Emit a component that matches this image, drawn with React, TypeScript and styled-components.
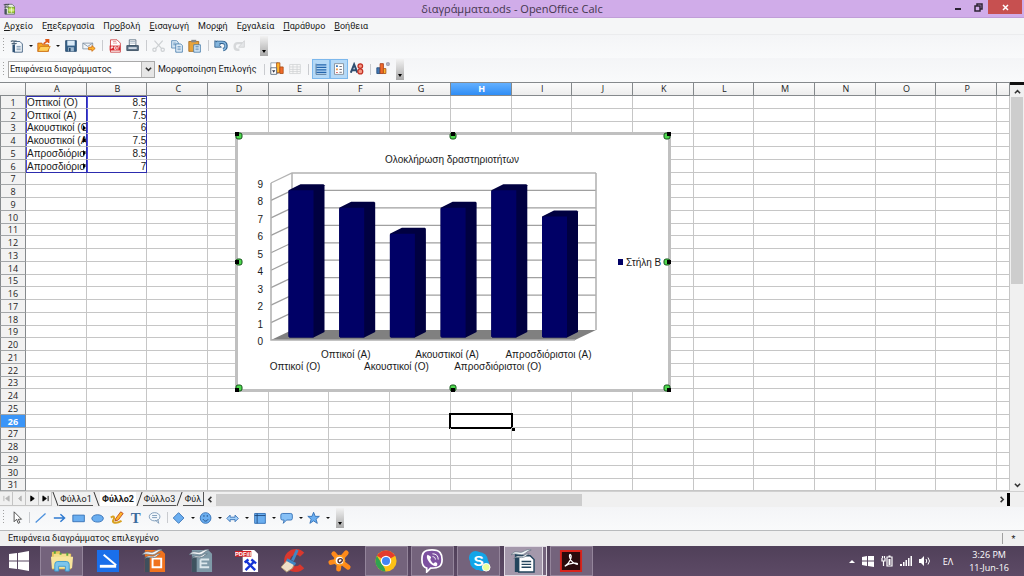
import React from 'react';
import styled, { createGlobalStyle, css } from 'styled-components';

const UI_FONT = `"Open Sans", "Noto Sans", sans-serif`;
const LABEL_FONT = `Roboto, "Noto Sans", sans-serif`;
const DOC_FONT = `"Liberation Sans", Arial, sans-serif`;

const GlobalStyle = createGlobalStyle`
  *, *::before, *::after { box-sizing: border-box; }
  body { margin: 0; background: #f5f6f7; font-family: ${UI_FONT}; font-size: 9px; color: #1a1a1a; }
  button, select { font: inherit; color: inherit; border: 0; background: none; padding: 0; margin: 0; }
`;

const Window = styled.div`
  min-height: 100vh;
  display: flex;
  flex-direction: column;
`;

/* ---------- title bar and menu ---------- */

const TitleBar = styled.header`
  display: grid;
  grid-template-columns: 1fr auto 1fr;
  height: 18px;
  background: #d0ace9;
  border-bottom: 1px solid #c09ed8;
`;
const TitleIcon = styled.div`
  padding: 2px 3px;
`;
const Title = styled.h1`
  margin: 0;
  font-size: 11px;
  line-height: 17px;
  font-weight: 400;
  color: #43364d;
`;
const WindowButtons = styled.div`
  display: flex;
  justify-content: flex-end;
  padding-right: 2px;
`;
const WindowButton = styled.button<{ $close?: boolean }>`
  display: flex;
  align-items: center;
  justify-content: center;
  width: ${p => (p.$close ? 34 : 20)}px;
  height: 14px;
  background: ${p => (p.$close ? '#c75050' : 'transparent')};
`;
const MenuBar = styled.nav`
  display: flex;
  gap: 9px;
  height: 17px;
  padding-left: 4px;
  font-family: ${LABEL_FONT};
  background: #f5f6f7;
  border-bottom: 1px solid #ebecee;
`;
const MenuItem = styled.button`
  line-height: 16px;
  white-space: nowrap;
`;

/* ---------- toolbars ---------- */

const Toolbar = styled.div<{ $h: number }>`
  display: flex;
  align-items: center;
  height: ${p => p.$h}px;
  padding-bottom: 2px;
  background: linear-gradient(#f4f5f7, #f9fafb);
`;
const Grip = styled.span`
  width: 2px;
  height: 15px;
  margin: 0 3px;
  background: repeating-linear-gradient(#a0a0a0 0 1px, transparent 1px 3px) 0 0 / 1px 100% no-repeat;
`;
const ToolGroup = styled.div<{ $gap?: number }>`
  display: flex;
  align-items: center;
  gap: ${p => p.$gap ?? 0}px;
`;
const ToolButton = styled.button<{ $on?: boolean }>`
  display: flex;
  align-items: center;
  justify-content: center;
  width: 18px;
  height: 20px;
  ${p => p.$on && css`
    background: #b5d9f7;
    border: 1px solid #7db8ec;
  `}
`;
const DropButton = styled.button`
  width: 9px;
  height: 18px;
  display: flex;
  align-items: center;
  justify-content: center;
  &::after {
    content: '';
    border: 2px solid transparent;
    border-top: 2px solid #111;
    border-bottom: 0;
  }
`;
const Separator = styled.span<{ $w: number }>`
  width: ${p => p.$w}px;
  height: 11px;
  background: linear-gradient(#c9cbcf, #c9cbcf) center / 1px 100% no-repeat;
`;
const Overflow = styled.button<{ $gap: number }>`
  align-self: stretch;
  width: 8px;
  margin: 1px 0 0 ${p => p.$gap}px;
  background: linear-gradient(#f2f2f2, #a9a9a9);
  display: flex;
  align-items: flex-end;
  justify-content: center;
  padding-bottom: 3px;
  &::after {
    content: '';
    border: 2px solid transparent;
    border-top: 3px solid #000;
    border-bottom: 0;
  }
`;
const SelectBox = styled.span`
  position: relative;
  display: flex;
  width: 147px;
  height: 17px;
  border: 1px solid #a9a9a9;
  background: #fff;
`;
const Select = styled.select`
  appearance: none;
  width: 100%;
  padding: 0 14px 0 1px;
  font-family: ${LABEL_FONT};
  font-size: 9px;
  line-height: 15px;
`;
const SelectArrow = styled.span`
  position: absolute;
  right: 0;
  top: 0;
  width: 13px;
  height: 15px;
  display: flex;
  align-items: center;
  justify-content: center;
  background: #e6e6e6;
  border-left: 1px solid #b4b4b4;
  pointer-events: none;
`;
const ToolLabel = styled.span`
  width: 105px;
  padding-left: 3px;
  font-family: ${LABEL_FONT};
  font-size: 9px;
  white-space: nowrap;
`;

/* ---------- sheet ---------- */

const SheetArea = styled.main`
  display: flex;
  background: #fff;
`;
const SheetCanvas = styled.div`
  position: relative;
  flex: 1;
  min-width: 0;
  overflow: hidden;
`;
const Grid = styled.table`
  width: 100%;
  table-layout: fixed;
  border-spacing: 0;
  border-collapse: separate;
`;
const HeadCell = styled.th<{ $on?: boolean }>`
  height: 14px;
  padding: 0 0 0 2px;
  font-size: 9px;
  line-height: 12px;
  font-weight: ${p => (p.$on ? 700 : 400)};
  color: ${p => (p.$on ? '#fff' : '#222')};
  background: ${p => (p.$on ? 'linear-gradient(#63b0ff, #2f8df5)' : 'linear-gradient(#fbfbfb, #ededed)')};
  border-right: 1px solid #85898c;
  border-bottom: 1px solid #85898c;
  border-top: 1px solid #85898c;
`;
const RowHead = styled.th<{ $on?: boolean }>`
  padding: 0;
  font-size: 9px;
  line-height: 11px;
  font-weight: ${p => (p.$on ? 700 : 400)};
  color: ${p => (p.$on ? '#fff' : '#222')};
  background: ${p => (p.$on ? '#3a95f8' : '#f2f2f2')};
  border-left: 1px solid #85898c;
  border-right: 1px solid #85898c;
  border-bottom: 1px solid #a3a6a8;
`;
const Row = styled.tr<{ $h: number }>`
  height: ${p => p.$h}px;
`;
const Cell = styled.td<{ $range?: boolean; $first?: boolean; $last?: boolean; $num?: boolean; $cursor?: boolean }>`
  position: relative;
  padding: 0 0 0 1px;
  font-family: ${DOC_FONT};
  font-size: 10px;
  line-height: 11px;
  white-space: nowrap;
  text-align: ${p => (p.$num ? 'right' : 'left')};
  border-right: 1px solid #c6c6c6;
  border-bottom: 1px solid #c6c6c6;
  ${p => p.$range && css`
    border-right-color: #2c2cae;
    box-shadow: inset 1px 0 0 #4a4ae0 ${p.$first ? ', inset 0 1px 0 #2c2cae' : ''};
    ${p.$last && 'border-bottom-color: #2c2cae;'}
  `}
  ${p => p.$cursor && css`
    &::before {
      content: '';
      position: absolute;
      inset: -2px;
      border: 2px solid #000;
    }
    &::after {
      content: '';
      position: absolute;
      right: -4px;
      bottom: -4px;
      width: 4px;
      height: 4px;
      background: #000;
    }
  `}
`;
const CellText = styled.div<{ $cut?: boolean }>`
  overflow: hidden;
  ${p => p.$cut && css`
    &::after {
      content: '';
      position: absolute;
      right: 0;
      top: 3px;
      border: 3px solid transparent;
      border-left: 3px solid #000;
      border-right: 0;
    }
  `}
`;
const VScroll = styled.div`
  width: 14px;
  display: flex;
  flex-direction: column;
  align-items: center;
  background: #f0f0f0;
  border-top: 3px solid #111;
`;
const ScrollArrow = styled.button`
  width: 12px;
  height: 12px;
  display: flex;
  align-items: center;
  justify-content: center;
`;
const VTrack = styled.div`
  flex: 1;
  width: 12px;
`;
const VThumb = styled.div`
  height: 49%;
  background: #cdcdcd;
`;

/* ---------- embedded chart ---------- */

const ChartObject = styled.figure`
  position: absolute;
  left: 235px;
  top: 50px;
  margin: 0;
  width: 436px;
  height: 260px;
  background: #fff;
  box-shadow: inset 0 0 0 3px #c0c0c0;
  svg { display: block; }
`;

/* ---------- sheet tabs ---------- */

const TabRow = styled.div`
  display: flex;
  height: 16px;
  background: #f0f0f0;
  border-top: 1px solid #d0d0d0;
`;
const NavButton = styled.button`
  width: 13px;
  height: 14px;
  display: flex;
  align-items: center;
  justify-content: center;
  border-right: 1px solid #c4c4c4;
  border-bottom: 1px solid #c4c4c4;
`;
const Tabs = styled.div`
  display: flex;
  width: 152px;
  height: 14px;
  overflow: hidden;
  border-right: 1px solid #555;
`;
const Tab = styled.button<{ $on?: boolean; $w: number }>`
  flex: none;
  width: ${p => p.$w}px;
  font-size: 9px;
  line-height: 12px;
  white-space: nowrap;
  text-align: center;
  font-weight: ${p => (p.$on ? 700 : 400)};
  font-family: ${LABEL_FONT};
  background: ${p => (p.$on ? '#fff' : 'transparent')};
  border-bottom: 1px solid ${p => (p.$on ? '#fff' : '#555')};
`;
const Slash = styled.span<{ $back?: boolean }>`
  flex: none;
  width: 1px;
  margin: 0 3px;
  background: #333;
  transform: skewX(${p => (p.$back ? 20 : -20)}deg);
`;
const HScroll = styled.div`
  flex: 1;
  display: flex;
  align-items: center;
`;
const HTrack = styled.div`
  flex: 1;
  height: 12px;
`;
const HThumb = styled.div`
  width: 47%;
  height: 12px;
  background: #cdcdcd;
`;
const SplitMark = styled.span`
  width: 3px;
  height: 13px;
  margin-right: 14px;
  background: #000;
`;

const StatusBar = styled.footer`
  display: flex;
  justify-content: space-between;
  height: 16px;
  padding-left: 8px;
  font-family: ${LABEL_FONT};
  font-size: 9px;
  line-height: 15px;
  background: #f0f0f0;
  border-top: 1px solid #b8babc;
`;
const StatusMark = styled.span`
  width: 22px;
  margin: 2px 0;
  line-height: 12px;
  text-align: center;
  border-left: 1px solid #a0a0a0;
`;

/* ---------- task bar ---------- */

const TaskBar = styled.div`
  display: flex;
  align-items: stretch;
  flex: 1;
  min-height: 30px;
  color: #fff;
  background: linear-gradient(#504059, #5d4a66);
`;
const StartButton = styled.button`
  width: 40px;
  display: flex;
  align-items: center;
  justify-content: center;
  padding-right: 3px;
`;
const TaskList = styled.div`
  display: flex;
  justify-content: space-between;
  width: 553px;
`;
const TaskButton = styled.button<{ $state?: 'open' | 'active' }>`
  width: 43px;
  display: flex;
  align-items: center;
  justify-content: center;
  border: 1px solid transparent;
  ${p => p.$state === 'open' && css`
    background: #74637c;
    border-color: #94859b;
  `}
  ${p => p.$state === 'active' && css`
    background: #a498ab;
    border-color: #e2dce5;
    padding-right: 4px;
    box-shadow: inset -3px 0 0 #74637c, inset -4px 0 0 #e2dce5;
  `}
`;
const Tray = styled.div`
  display: flex;
  align-items: center;
  gap: 7px;
  margin-left: auto;
  padding-right: 15px;
`;
const Lang = styled.span`
  margin: 0 9px 0 5px;
  font-size: 9px;
`;
const Clock = styled.time`
  font-size: 9px;
  line-height: 13px;
  text-align: center;
  white-space: nowrap;
`;

/* ---------- icons ---------- */

const BLUE = '#6aaef0';
const EDGE = '#2a68b0';
const NAVY = '#2f5274';

const art: Record<string, React.ReactNode> = {
  calc: <><path d="M3 3h9l3 3v10H3z" fill="#e9f0e2" stroke="#5a6b60" /><path d="M1 4c3-2 4 1 7-1M2 7c3-2 4 1 6-1" stroke="#4b4f58" fill="none" strokeWidth="1.5" /><path d="M2 9v7h3V9z" fill="#47525c" /><path d="M7 7h8v7H7z" fill="#b7dc4d" stroke="#6c9a20" /><path d="M7 10.500h8M11 7v7" stroke="#f4fbdc" /></>,
  newdoc: <><path d="M5 3h7l3 3v10H5z" fill="#f4f8fc" stroke={NAVY} /><path d="M3 7v9h3V7z" fill={NAVY} /><path d="M1 3c3-2 4 1 7-1M2 6c3-2 4 1 6-1" stroke="#52677a" fill="none" strokeWidth="1.500" /><path d="M8 9h5M8 11h5M8 13h5" stroke="#6c8aa6" /></>,
  open: <><path d="M1 5h5l1 2h7v8H1z" fill="#f7a823" stroke="#c65a12" /><path d="M1 15l3-6h12l-3 6z" fill="#ffd15a" stroke="#d07718" /><path d="M8 6l5-4M10 1h4v4" stroke="#e05b1a" fill="none" strokeWidth="2" /></>,
  save: <><path d="M2 2h13v13H2z" fill="#366189" stroke="#25476a" /><path d="M4 2h9v6H4z" fill="#dcebf7" /><path d="M5 10h7v5H5z" fill="#9fb9cf" /><path d="M6 11h2v4H6z" fill="#25476a" /></>,
  mail: <><path d="M1 5h12v7H1z" fill="#f3f6f9" stroke="#7e8fa0" /><path d="M1 5l6 4 6-4" fill="none" stroke="#7e8fa0" /><path d="M8 10h4V8l4 3.500-4 3.500v-2H8z" fill="#ffb52c" stroke="#cc6a12" /></>,
  pdf: <><path d="M3 1h8l4 4v11H3z" fill="#fff" stroke="#c9383a" /><path d="M2 8h13v6H2z" fill="#d8282c" /><path d="M4 12V9.500h2v1H4M8 9.500v3h2v-3zM12 13V9.500h2" stroke="#fff" fill="none" /><path d="M6 3h4M6 5h5" stroke="#e69091" /></>,
  print: <><path d="M4 1h8v7H4z" fill="#fff" stroke="#54697c" /><path d="M1 8h14v6H1z" fill="#5d7388" stroke="#34495d" /><path d="M3 11h10" stroke="#dfe7ee" strokeWidth="2" /><path d="M5 3h6M5 5h6" stroke="#9fb0bf" /></>,
  cut: <><path d="M3 2l9 10M13 2L4 12" stroke="#cdd0d3" strokeWidth="1.500" /><circle cx="3" cy="13" r="2" fill="none" stroke="#cdd0d3" strokeWidth="1.500" /><circle cx="13" cy="13" r="2" fill="none" stroke="#cdd0d3" strokeWidth="1.500" /></>,
  copy: <><path d="M2 2h6l2 2v7H2z" fill="#d5e6f4" stroke="#5888b3" /><path d="M7 6h6l2 2v8H7z" fill="#e8f3fc" stroke="#3f77a8" /><path d="M4 5h3M4 7h3M9 9h4M9 11h4M9 13h4" stroke="#5888b3" /></>,
  paste: <><path d="M1 3h12v12H1z" fill="#e9a33a" stroke="#a4661a" /><path d="M4 1h6v3H4z" fill="#888" /><path d="M7 7h8v9H7z" fill="#dcecf9" stroke="#3f77a8" /><path d="M9 9h4M9 11h4M9 13h4" stroke="#5888b3" /></>,
  undo: <><path d="M2 4h8c6 0 6 8 1 9" fill="none" stroke="#2f5f8c" strokeWidth="4" /><path d="M1 2v8h8L6.500 7.500 8 6 4 2.500 3 3.500z" fill="#84b5dd" stroke="#2f5f8c" /><path d="M4 4h6c5.500 0 5.500 8 1 9" fill="none" stroke="#84b5dd" strokeWidth="2" /></>,
  redo: <><path d="M13 5H7c-5 0-5 8 0 8h2" fill="none" stroke="#d6d8da" strokeWidth="3" /><path d="M15 2v8H8z" fill="#e4e6e8" stroke="#cfd1d3" /></>,
  chartFormat: <><path d="M1 1h9v13H1z" fill="#fff" stroke="#8796a5" /><path d="M8 1h4v12H8z" fill="#ffb52c" stroke="#a84f16" /><path d="M12 6h4v8h-4z" fill="#f26a2a" stroke="#a84f16" /><path d="M1 7h7v8H1z" fill="#fff" stroke="#546474" /><path d="M2.500 10h4l-2 3z" fill="#334" /></>,
  table: <path d="M2 3h13v11H2zM2 6h13M2 9h13M2 11.500h13M6 3v11M11 3v11" fill="#f7f7f7" stroke="#d2d4d6" />,
  lines: <><path d="M2.500 2v13H15" fill="none" stroke="#4c6a86" /><path d="M3 3.500h12M3 6.500h12M3 9.500h12M3 12.500h12" stroke="#2465ad" strokeWidth="1.500" /></>,
  legend: <><path d="M3 2h11v13H3z" fill="#fff" stroke="#7d8894" /><path d="M5 4h2v2H5z" fill="#2465ad" /><path d="M5 8h2v2H5z" fill="#f28a2a" /><path d="M5 12h2v1H5z" fill="#c22" /><path d="M9 5.500h3M9 9h3M9 12.500h3" stroke="#556" /></>,
  scaleText: <><path d="M1 13L5 3l4 10M3 10h5" fill="none" stroke="#2f4e70" strokeWidth="2.500" /><circle cx="12.500" cy="5" r="2.800" fill="#f59a86" stroke="#c22f22" strokeWidth="1.500" /><circle cx="12.500" cy="11.500" r="3" fill="#f59a86" stroke="#c22f22" strokeWidth="1.500" /></>,
  chartAuto: <><path d="M1 7h4v7H1z" fill="#3f77b5" stroke="#234a77" /><path d="M5 2h4v12H5z" fill="#f26a2a" stroke="#a63a16" /><path d="M9 8h3v6H9z" fill="#ffb52c" stroke="#a84f16" /><path d="M13 1h3v3h-3z" fill="#ccd" stroke="#889" /></>,
  pointer: <path d="M5 1v12l3-3 2 5 2-1-2-4h4z" fill="#fff" stroke="#333" />,
  line: <path d="M2 14L14 3" stroke="#4a8fdc" strokeWidth="1.500" />,
  arrow: <path d="M1 8.500h13M9 4l5 4.500L9 13" fill="none" stroke="#2f7ad0" strokeWidth="1.800" />,
  rect: <path d="M1 5h14v8H1z" fill={BLUE} stroke={EDGE} />,
  ellipse: <ellipse cx="8" cy="9" rx="7" ry="4.500" fill={BLUE} stroke={EDGE} />,
  freehand: <><path d="M7 9l6-8 3 2-6 8-4 1z" fill="#ffb52c" stroke="#b8401a" /><path d="M1 8c4-3 5 0 3 3s3 5 10 1" fill="none" stroke="#d9a120" strokeWidth="2.500" /></>,
  text: <text x="8" y="15" textAnchor="middle" fontFamily="Liberation Serif, serif" fontWeight="700" fontSize="18" fill="#3c6c9e">T</text>,
  callout: <><ellipse cx="8" cy="7" rx="6.500" ry="5" fill="#f3f7fb" stroke="#6e8fb0" /><path d="M9 11l4 4-1-5M5 5.500h6M5 8h6" fill="none" stroke="#6e8fb0" /></>,
  diamond: <path d="M8 2l6.500 6.500L8 15 1.500 8.500z" fill={BLUE} stroke={EDGE} />,
  smile: <><circle cx="8" cy="8.500" r="6.500" fill={BLUE} stroke={EDGE} /><path d="M5 10c1.500 3 4.500 3 6 0M6 5v2M10 5v2" fill="none" stroke="#173f73" /></>,
  arrows: <path d="M1 9l4-4v2.500h6V5l4 4-4 4v-2.500H5V13z" fill="#a5d0f8" stroke={EDGE} />,
  flow: <><path d="M2 3h13v12H2z" fill={BLUE} stroke={EDGE} /><path d="M5 3v12M2 5.500h13" stroke="#173f73" /></>,
  bubble: <path d="M3 3h10q2 0 2 2v4q0 2-2 2H8l-4 4 1-4H3q-2 0-2-2V5q0-2 2-2z" fill="#86c0f6" stroke={EDGE} />,
  star: <path d="M8 1.500l2 5h5l-4 3.500 1.500 5L8 12l-4.500 3L5 10 1 6.500h5z" fill={BLUE} stroke={EDGE} />,
};

const Icon = ({ name, size = 14 }: { name: string; size?: number }) => (
  <svg width={size} height={size} viewBox="0 0 17 17" aria-hidden="true">{art[name]}</svg>
);

const Chevron = ({ d, size = 7 }: { d: string; size?: number }) => (
  <svg width={size} height={size} viewBox="0 0 8 8" aria-hidden="true">
    <path d={d} fill="none" stroke="#333" strokeWidth="1.700" />
  </svg>
);

const feather = <path d="M0 6C5 0 8 5 12 3s6-3 9-2c-5 1-6 5-10 5S5 4 0 6zM3 10c4-5 7-1 10-3s4-2 6-2c-4 2-4 4-8 4s-5-1-8 1z" fill="#f3f6f8" stroke="#4f6473" strokeWidth=".6" />;

const taskArt: Record<string, React.ReactNode> = {
  explorer: <><path d="M2 3l8-1 1 3h11v16H2z" fill="#e9c65c" /><path d="M4 5h17v7H4z" fill="#f3dd8b" /><path d="M1 8h23l-1 12H2z" fill="#f8e59c" /><path d="M5 23v-7q0-3 3-3h9q3 0 3 3v7h-4v-5H9v5z" fill="#7cc5ec" stroke="#3d9bd0" /><path d="M5 2v3M11 4v2M18 4v3" stroke="#5aa53c" strokeWidth="2" /></>,
  scanner: <><path d="M1 1h23v23H1z" fill="#1a6fea" /><path d="M4 16.500h17v3H4z" fill="#fff" /><path d="M8 6l13 11" stroke="#fff" strokeWidth="2" /></>,
  impress: <><path d="M3 1h17l4 4v19H3z" fill="#f0731e" /><path d="M3 8h5v16H3z" fill="#3e4f5c" /><path d="M11 10h9v9h-9z" fill="none" stroke="#fff" strokeWidth="2" />{feather}</>,
  base: <><path d="M3 1h17l4 4v19H3z" fill="#7f9aa8" /><path d="M3 8h5v16H3z" fill="#3e5360" /><path d="M12 11h9M12 15h7M12 19h9M12 11v9" fill="none" stroke="#dce7ec" strokeWidth="2" />{feather}</>,
  pdftool: <><path d="M8 1h12l4 4v19H8z" fill="#fff" /><path d="M0 2h17v6H0z" fill="#d21e24" /><text x="8.500" y="7.500" textAnchor="middle" fontFamily="Liberation Sans" fontWeight="700" fontSize="6" fill="#fff">PDFill</text><path d="M11 22l9-9M12 13l9 9M10 14l4-3M17 11l5 4" stroke="#1534d6" strokeWidth="2.500" /></>,
  ccleaner: <><path d="M22 6A9 9 0 1 0 22 18" fill="none" stroke="#d8382e" strokeWidth="6" /><path d="M17 1l-5 11" stroke="#3f88c4" strokeWidth="3" /><path d="M7 11l7 4-2 5-6 4-6-5z" fill="#eee0c8" stroke="#b09872" /><path d="M6 11l9 5" stroke="#3f88c4" strokeWidth="3" /></>,
  avast: <><path d="M12 12L6 5M12 12l7-8M12 12l9 7M12 12l-9 2M12 12l-1 9" stroke="#ff8a1a" strokeWidth="5" strokeLinecap="round" /><circle cx="12" cy="12" r="6" fill="#ff9a20" /><circle cx="12" cy="12" r="4" fill="#fff" /><path d="M14 14c-4 2-5-4-1-4 3 0 2 4 0 3" fill="none" stroke="#533" strokeWidth="1.500" /></>,
  chrome: <><circle cx="12.500" cy="12.500" r="11" fill="#fbc116" /><path d="M12.500 12.500L3 7A11 11 0 0 1 22 7z" fill="#e33b2e" /><path d="M3 7l8 13 1 3.500A11 11 0 0 1 3 7z" fill="#31a350" /><circle cx="12.500" cy="12.500" r="5.500" fill="#fff" /><circle cx="12.500" cy="12.500" r="4.200" fill="#4285f4" /></>,
  viber: <><path d="M12.500 1C3 1 2 5 2 11c0 5 1 8 5 9v4l4-4c9 0 12-2 12-9 0-6-2-10-10.500-10z" fill="#7d51a0" stroke="#fff" strokeWidth="1.800" /><path d="M8 6c-3 2 2 11 8 12 2 0 3-3 1-4s-2 1-3 1-4-4-3-5 1-2-3-4z" fill="#fff" /><path d="M13 5c4 0 6 2 6 6M13 8c2 0 3 1 3 3" fill="none" stroke="#fff" /></>,
  skype: <><circle cx="9" cy="9" r="7" fill="#12a5e8" /><circle cx="16" cy="16" r="7" fill="#12a5e8" /><circle cx="12.500" cy="12.500" r="9.500" fill="#12a5e8" /><text x="12" y="18" textAnchor="middle" fontFamily="Liberation Sans" fontWeight="700" fontSize="16" fill="#fff">S</text><circle cx="20" cy="19" r="4" fill="#eaff9c" stroke="#fff" /></>,
  writer: <><path d="M4 5h7v19H4z" fill="#23445c" /><path d="M8 7h12l4 4v13H8z" fill="#fff" stroke="#23445c" strokeWidth="1.500" /><path d="M11 13h10M11 16h10M11 19h10" stroke="#23445c" strokeWidth="1.500" />{feather}</>,
  reader: <><path d="M2 2h21v21H2z" fill="#2a0a0c" stroke="#d9241c" strokeWidth="2" /><path d="M6 18c5-3 8-10 6-12s-2 8 7 10c2-2-8-2-13 2z" fill="none" stroke="#fff" strokeWidth="1.300" /></>,
};

/* ---------- data ---------- */

const menus = ['|Α|ρχείο', 'Ε|π|εξεργασία', 'Πρ|ο|βολή', '|Ε|ισαγωγή', 'Μορ|φ|ή', 'Ε|ρ|γαλεία', '|Π|αράθυρο', '|Β|οήθεια'];
const columns = 'ABCDEFGHIJKLMNOP'.split('');
const data = [
  { label: 'Οπτικοί (Ο)', value: 8.5 },
  { label: 'Οπτικοί (Α)', value: 7.5 },
  { label: 'Ακουστικοί (Ο)', value: 6, cut: true },
  { label: 'Ακουστικοί (Α)', value: 7.5, cut: true },
  { label: 'Απροσδιόριστοι (Ο)', value: 8.5, cut: true },
  { label: 'Απροσδιόριστοι (Α)', value: 7, cut: true },
];
const tasks: [string, string, ('open' | 'active')?][] = [
  ['explorer', 'File Explorer', 'open'], ['scanner', 'Scanner'], ['impress', 'Impress'], ['base', 'OpenOffice'],
  ['pdftool', 'PDF tools'], ['ccleaner', 'CCleaner'], ['avast', 'Avast'], ['chrome', 'Chrome', 'open'],
  ['viber', 'Viber', 'open'], ['skype', 'Skype', 'open'], ['writer', 'OpenOffice Writer', 'active'], ['reader', 'Adobe Reader', 'open'],
];

const MenuText = ({ text }: { text: string }) => {
  const [before, key, after] = text.split('|');
  return <>{before}<u>{key}</u>{after}</>;
};

const Tool = ({ name, label, drop, on }: { name: string; label: string; drop?: boolean; on?: boolean }) => (
  <>
    <ToolButton aria-label={label} $on={on}><Icon name={name} /></ToolButton>
    {drop && <DropButton aria-label={`${label} menu`} />}
  </>
);

/* ---------- chart ---------- */

const UNIT = 157 / 9;
const handles: [number, number, number, number][] = [
  [2, 2, 1, 1], [218, 2, 0, 1], [434, 2, -1, 1],
  [2, 130, 1, 0], [434, 130, -1, 0],
  [2, 258, 1, -1], [218, 258, 0, -1], [434, 258, -1, -1],
];

const Chart = () => (
  <ChartObject aria-label="Ολοκλήρωση δραστηριοτήτων">
    <svg width="436" height="260" viewBox="0 0 436 260" fontFamily="Liberation Sans, Arial, sans-serif" fontSize="10" fill="#1a1a1a">
      <text x="217" y="31" textAnchor="middle">Ολοκλήρωση δραστηριοτήτων</text>
      <path d="M36 208L57 198H361L340 208z" fill="#808080" />
      {Array.from({ length: 10 }, (_, i) => {
        const y = 208 - i * UNIT;
        return (
          <g key={i}>
            {i > 0 && <path d={`M36 ${y}L57 ${y - 10}H361`} fill="none" stroke={i === 9 ? '#b3b3b3' : '#a0a0a0'} strokeWidth="1.3" />}
            <text x="28" y={y + 5} textAnchor="end">{i}</text>
          </g>
        );
      })}
      <path d="M36 51V208H340M57 41V198M361 41V198" fill="none" stroke="#b0b0b0" strokeWidth="1.500" />
      {data.map((d, i) => {
        const x = 53.5 + i * 50.7;
        const top = 205.5 - d.value * UNIT;
        return (
          <g key={d.label}>
            <path d={`M${x} ${top + 1}L${x + 12} ${top - 5}H${x + 35}L${x + 36} ${top - 4}V200L${x + 25} 205.5H${x + 1}L${x} 204.5z`} fill="#000040" />
            <path d={`M${x} ${top + 2}L${x + 2} ${top + 1}H${x + 25}V205.500H${x + 1}L${x} 204.5z`} fill="#000066" />
          </g>
        );
      })}
      {data.map((d, i) => (
        <text key={d.label} x={60 + i * 50.7} y={i % 2 ? 226 : 238} textAnchor="middle">{d.label}</text>
      ))}
      <path d="M383 127h5v6h-5z" fill="#000066" />
      <text x="391" y="134">Στήλη B</text>
      {handles.map(([x, y, dx, dy]) => (
        <g key={`${x}-${y}`}>
          <rect x={x + dx * 2 - 3} y={y + dy * 2 - 3} width="6" height="6" rx="2" fill="#4fd94f" stroke="#14551a" />
          <path d={`M${x - 2} ${y - 2}h4v4h-4z`} fill="#000" />
        </g>
      ))}
    </svg>
  </ChartObject>
);

const Sheet = () => (
  <SheetArea>
    <SheetCanvas>
      <Grid>
        <colgroup>
          <col width="26" />
          {columns.map(c => <col key={c} />)}
          <col width="13" />
        </colgroup>
        <thead>
          <tr>
            <HeadCell />
            {columns.map(c => <HeadCell key={c} scope="col" $on={c === 'H'}>{c}</HeadCell>)}
            <HeadCell />
          </tr>
        </thead>
        <tbody>
          {Array.from({ length: 31 }, (_, r) => (
            <Row key={r} $h={r % 4 === 2 ? 12 : 13}>
              <RowHead scope="row" $on={r === 25}>{r + 1}</RowHead>
              {columns.map((c, ci) => {
                const d = data[r];
                const filled = Boolean(d) && ci < 2;
                return (
                  <Cell key={c} $range={filled} $first={r === 0} $last={r === 5} $num={ci === 1} $cursor={r === 25 && c === 'H'}>
                    {filled && <CellText $cut={ci === 0 && d.cut}>{ci === 0 ? d.label : d.value}</CellText>}
                  </Cell>
                );
              })}
              <Cell />
            </Row>
          ))}
        </tbody>
      </Grid>
      <Chart />
    </SheetCanvas>
    <VScroll>
      <ScrollArrow aria-label="Scroll up"><Chevron d="M1 6l3-3 3 3" /></ScrollArrow>
      <VTrack><VThumb /></VTrack>
      <ScrollArrow aria-label="Scroll down"><Chevron d="M1 2l3 3 3-3" /></ScrollArrow>
    </VScroll>
  </SheetArea>
);

const navShapes: [string, string, string][] = [
  ['First sheet', 'M1 1v6M7 1L3 4l4 3z', '#b5b5b5'],
  ['Previous sheet', 'M6 1L3 4l3 3z', '#b5b5b5'],
  ['Next sheet', 'M2 1l4 3-4 3z', '#000'],
  ['Last sheet', 'M1 1l4 3-4 3zM7 1v6', '#000'],
];

export default function App() {
  return (
    <Window>
      <GlobalStyle />
      <TitleBar>
        <TitleIcon><Icon name="calc" size={13} /></TitleIcon>
        <Title>διαγράμματα.ods - OpenOffice Calc</Title>
        <WindowButtons>
          <WindowButton aria-label="Minimize"><svg width="8" height="8"><path d="M1 5h6v2H1z" fill="#2c2333" /></svg></WindowButton>
          <WindowButton aria-label="Restore"><svg width="9" height="9" viewBox="0 0 9 9"><path d="M1 3h5v5H1zM3 3V1h5v5H6" fill="none" stroke="#2c2333" strokeWidth="1.500" /></svg></WindowButton>
          <WindowButton aria-label="Close" $close><svg width="7" height="7" viewBox="0 0 7 7"><path d="M1 1l5 5M6 1L1 6" stroke="#fff" strokeWidth="1.500" /></svg></WindowButton>
        </WindowButtons>
      </TitleBar>
      <MenuBar>
        {menus.map(m => <MenuItem key={m}><MenuText text={m} /></MenuItem>)}
      </MenuBar>

      <Toolbar $h={23}>
        <Grip />
        <Tool name="newdoc" label="New" drop />
        <Tool name="open" label="Open" drop />
        <Tool name="save" label="Save" />
        <Tool name="mail" label="E-mail" />
        <Separator $w={8} />
        <Tool name="pdf" label="Export as PDF" />
        <Tool name="print" label="Print" />
        <Separator $w={8} />
        <Tool name="cut" label="Cut" />
        <Tool name="copy" label="Copy" />
        <Tool name="paste" label="Paste" />
        <Separator $w={8} />
        <Tool name="undo" label="Undo" />
        <Tool name="redo" label="Redo" />
        <Overflow aria-label="More standard tools" $gap={12} />
      </Toolbar>

      <Toolbar $h={24}>
        <Grip />
        <SelectBox>
          <Select aria-label="Στοιχείο διαγράμματος" defaultValue="area">
            <option value="area">Επιφάνεια διαγράμματος</option>
          </Select>
          <SelectArrow><Chevron d="M1 2l3 3 3-3" /></SelectArrow>
        </SelectBox>
        <ToolLabel>Μορφοποίηση Επιλογής</ToolLabel>
        <Separator $w={8} />
        <Tool name="chartFormat" label="Chart type" />
        <Tool name="table" label="Chart data table" />
        <Separator $w={8} />
        <Tool name="lines" label="Horizontal grids" on />
        <Tool name="legend" label="Legend" on />
        <Tool name="scaleText" label="Scale text" />
        <Separator $w={8} />
        <Tool name="chartAuto" label="Automatic layout" />
        <Overflow aria-label="More chart tools" $gap={4} />
      </Toolbar>

      <Sheet />

      <TabRow>
        {navShapes.map(([label, d, color]) => (
          <NavButton key={label} aria-label={label}>
            <svg width="7" height="7" viewBox="0 0 8 8"><path d={d} fill={color} stroke={color} /></svg>
          </NavButton>
        ))}
        <Tabs>
          <Slash $back />
          <Tab $w={34}>Φύλλο1</Tab>
          <Slash $back />
          <Tab $w={36} $on>Φύλλο2</Tab>
          <Slash />
          <Tab $w={33}>Φύλλο3</Tab>
          <Slash />
          <Tab $w={20}>Φύλ</Tab>
        </Tabs>
        <HScroll>
          <ScrollArrow aria-label="Scroll left"><Chevron d="M5 1L2 4l3 3" /></ScrollArrow>
          <HTrack><HThumb /></HTrack>
          <ScrollArrow aria-label="Scroll right"><Chevron d="M3 1l3 3-3 3" /></ScrollArrow>
          <SplitMark />
        </HScroll>
      </TabRow>

      <Toolbar $h={23}>
        <Grip />
        <Tool name="pointer" label="Select" />
        <Separator $w={6} />
        <ToolGroup $gap={1}>
          <Tool name="line" label="Line" />
          <Tool name="arrow" label="Arrow" />
          <Tool name="rect" label="Rectangle" />
          <Tool name="ellipse" label="Ellipse" />
          <Tool name="freehand" label="Freeform line" />
          <Tool name="text" label="Text" />
          <Tool name="callout" label="Callouts" />
        </ToolGroup>
        <Separator $w={6} />
        <Tool name="diamond" label="Basic shapes" drop />
        <Tool name="smile" label="Symbol shapes" drop />
        <Tool name="arrows" label="Block arrows" drop />
        <Tool name="flow" label="Flowcharts" drop />
        <Tool name="bubble" label="Callout shapes" drop />
        <Tool name="star" label="Stars" drop />
        <Overflow aria-label="More drawing tools" $gap={4} />
      </Toolbar>

      <StatusBar>
        <span>Επιφάνεια διαγράμματος επιλεγμένο</span>
        <StatusMark>*</StatusMark>
      </StatusBar>

      <TaskBar>
        <StartButton aria-label="Start">
          <svg width="20" height="20" viewBox="0 0 20 20"><path d="M0 3l8-1v7.500H0zM9 2l11-2v9.500H9zM0 10.500h8V18l-8-1zM9 10.500h11V20L9 18z" fill="#fff" /></svg>
        </StartButton>
        <TaskList>
          {tasks.map(([name, label, state]) => (
            <TaskButton key={name} aria-label={label} $state={state}>
              <svg width="24" height="24" viewBox="0 0 25 25" aria-hidden="true">{taskArt[name]}</svg>
            </TaskButton>
          ))}
        </TaskList>
        <Tray>
          <svg width="6" height="4"><path d="M0 4l3-3 3 3z" fill="#fff" /></svg>
          <svg width="12" height="12" viewBox="0 0 12 12"><path d="M0 2l5-1v4.500H0zM6 1h6v4.500H6zM0 6.500h5V11l-5-1zM6 6.500h6V12l-6-1z" fill="#fff" /></svg>
          <svg width="12" height="12" viewBox="0 0 12 12"><path d="M6 2h5v9H6zM7.500 1h2M1 3v3h3V3M2.500 6v5M1.500 1v2M3.500 1v2" fill="none" stroke="#fff" strokeWidth="1.200" /><path d="M7.500 4h2v6h-2z" fill="#fff" /></svg>
          <svg width="12" height="12" viewBox="0 0 12 12"><path d="M0 9h2v2H0zM3 7h1.500v4H3zM5.500 5H7v6H5.500zM8 3h1.500v8H8zM10.500 1H12v10h-1.500z" fill="#fff" /></svg>
          <svg width="12" height="12" viewBox="0 0 12 12"><path d="M0 4h2l3-3v10L2 8H0z" fill="#fff" /><path d="M7 4q1.500 2 0 4M9 2.500q3 3.500 0 7" fill="none" stroke="#fff" /></svg>
          <Lang>ΕΛ</Lang>
          <Clock>3:26 PM<br />11-Jun-16</Clock>
        </Tray>
      </TaskBar>
    </Window>
  );
}
